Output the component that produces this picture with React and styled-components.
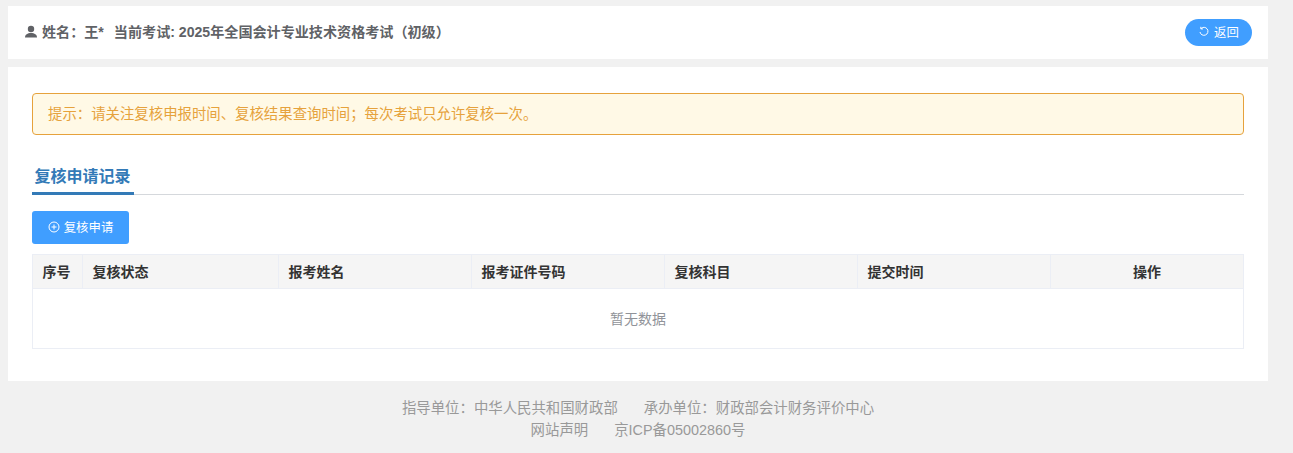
import React from 'react';
import styled, { createGlobalStyle } from 'styled-components';

const GlobalStyle = createGlobalStyle`
  html, body {
    margin: 0;
    padding: 0;
    background: #f1f1f1;
    font-family: "Liberation Sans", "Noto Sans CJK SC", sans-serif;
  }
  * {
    box-sizing: border-box;
  }
`;

const Page = styled.div`
  width: 1260px;
  margin-left: 8px;
  padding-top: 6px;
`;

const Header = styled.header`
  height: 53px;
  background: #fff;
  display: flex;
  align-items: center;
  justify-content: space-between;
  padding: 0 16px;
  color: #606266;
  font-size: 14.1px;
  font-weight: 700;
`;

const UserInfo = styled.div`
  display: flex;
  align-items: center;
  padding-bottom: 4px;
`;

const UserIcon = styled.svg`
  width: 14px;
  height: 14px;
  margin: 2px 4px 0 0;
  fill: #606266;
`;

const ExamName = styled.span`
  margin-left: 10px;
`;

const BackButton = styled.button`
  width: 67px;
  height: 27px;
  border: none;
  border-radius: 14px;
  background: #409eff;
  color: #fff;
  font-family: inherit;
  font-size: 12.4px;
  display: flex;
  align-items: center;
  justify-content: center;
  gap: 4px;
  padding: 0 0 1px;
`;

const Main = styled.main`
  margin-top: 8px;
  height: 314px;
  background: #fff;
  padding: 26px 24px 0;
`;

const Alert = styled.div`
  height: 42px;
  border: 1px solid #e6a23c;
  border-radius: 4px;
  background: #fff9e6;
  color: #e6a23c;
  font-size: 14.4px;
  display: flex;
  align-items: center;
  padding: 0 0 4px 15px;
`;

const TabBar = styled.div`
  margin-top: 26px;
  height: 34px;
  border-bottom: 1px solid #d5d8dc;
  display: flex;
`;

const Tab = styled.div`
  height: 34px;
  width: 102px;
  padding-left: 2.500px;
  border-bottom: 3px solid #337ab7;
  color: #337ab7;
  font-size: 16px;
  font-weight: 700;
  line-height: 32px;
  white-space: nowrap;
`;

const ApplyButton = styled.button`
  margin-top: 16px;
  width: 97px;
  height: 33px;
  border: none;
  border-radius: 3px;
  background: #409eff;
  color: #fff;
  font-family: inherit;
  font-size: 12.4px;
  display: flex;
  align-items: center;
  justify-content: center;
  gap: 4px;
  padding: 0 0 1px;
`;

const Table = styled.table`
  margin-top: 10px;
  width: 1212px;
  table-layout: fixed;
  border-collapse: separate;
  border-spacing: 0;
  font-size: 14px;
  border: 1px solid #ebeef5;
`;

const Th = styled.th`
  height: 34px;
  background: #f5f5f5;
  border-bottom: 1px solid #ebeef5;
  border-left: ${(p) => (p.$first ? 'none' : '1px solid #ebeef5')};
  color: #333;
  font-weight: 700;
  padding: 0 ${(p) => (p.$center ? 0 : 9.5)}px 2px;
  text-align: ${(p) => (p.$center ? 'center' : 'left')};
`;

const EmptyCell = styled.td`
  height: 59px;
  color: #909399;
  text-align: center;
  padding-bottom: 2px;
`;

const Footer = styled.footer`
  margin-top: 16px;
  text-align: center;
  color: #999;
  font-size: 14.4px;
  line-height: 22px;
`;

const FooterItem = styled.span`
  & + & {
    margin-left: 26px;
  }
`;

const columns = [
  { title: '序号', width: 49 },
  { title: '复核状态', width: 196 },
  { title: '报考姓名', width: 193 },
  { title: '报考证件号码', width: 193 },
  { title: '复核科目', width: 193 },
  { title: '提交时间', width: 193 },
  { title: '操作', width: 193, center: true },
];

const App = () => (
  <>
    <GlobalStyle />
    <Page>
      <Header>
        <UserInfo>
          <UserIcon viewBox="0 0 14 14">
            <circle cx="7" cy="4" r="3.2" />
            <path d="M1 12.500C1 9.500 3.500 8 7 8s6 1.500 6 4.500z" />
          </UserIcon>
          <span>姓名：王*</span>
          <ExamName>当前考试: 2025年全国会计专业技术资格考试（初级）</ExamName>
        </UserInfo>
        <BackButton>
          <svg width="12" height="12" viewBox="0 0 12 12" fill="none" stroke="#fff" strokeWidth="1">
            <path d="M3 2.600A4 4 0 1 1 2 6" />
            <path d="M2.800 0.800V2.900H5" />
          </svg>
          返回
        </BackButton>
      </Header>
      <Main>
        <Alert>提示：请关注复核申报时间、复核结果查询时间；每次考试只允许复核一次。</Alert>
        <TabBar>
          <Tab>复核申请记录</Tab>
        </TabBar>
        <ApplyButton>
          <svg width="12" height="12" viewBox="0 0 12 12" fill="none" stroke="#fff" strokeWidth="1">
            <circle cx="6" cy="6" r="5" />
            <path d="M3.500 6h5M6 3.500v5" />
          </svg>
          复核申请
        </ApplyButton>
        <Table>
          <colgroup>
            {columns.map((c) => (
              <col key={c.title} width={c.width} />
            ))}
          </colgroup>
          <thead>
            <tr>
              {columns.map((c, i) => (
                <Th key={c.title} $center={c.center} $first={i === 0}>{c.title}</Th>
              ))}
            </tr>
          </thead>
          <tbody>
            <tr>
              <EmptyCell colSpan={7}>暂无数据</EmptyCell>
            </tr>
          </tbody>
        </Table>
      </Main>
      <Footer>
        <div>
          <FooterItem>指导单位：中华人民共和国财政部</FooterItem>
          <FooterItem>承办单位：财政部会计财务评价中心</FooterItem>
        </div>
        <div>
          <FooterItem>网站声明</FooterItem>
          <FooterItem>京ICP备05002860号</FooterItem>
        </div>
      </Footer>
    </Page>
  </>
);

export default App;
